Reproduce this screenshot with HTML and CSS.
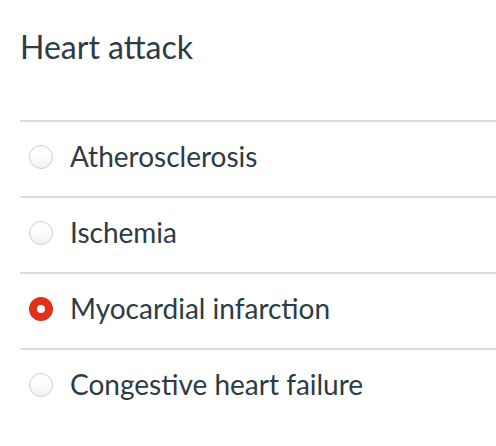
FILE: index.html
```html
<!DOCTYPE html>
<html>
<head>
<meta charset="utf-8">
<link rel="stylesheet" href="styles.css">
</head>
<body>
<div class="quiz">
  <div class="title">Heart attack</div>
  <ul class="options">
    <li class="option"><span class="radio"></span><span class="label">Atherosclerosis</span></li>
    <li class="option"><span class="radio"></span><span class="label">Ischemia</span></li>
    <li class="option"><span class="radio checked"></span><span class="label">Myocardial infarction</span></li>
    <li class="option"><span class="radio"></span><span class="label">Congestive heart failure</span></li>
  </ul>
</div>
</body>
</html>
```
FILE: styles.css
```css
html, body {
  margin: 0;
  padding: 0;
  background: #fff;
}
.quiz {
  padding: 28px 0 0 20px;
  font-family: Lato, "Open Sans", sans-serif;
  color: #2d3b45;
}
.title {
  font-size: 32px;
  line-height: 38px;
  height: 92px;
}
.options {
  list-style: none;
  margin: 0;
  padding: 0;
}
.option {
  display: flex;
  align-items: center;
  height: 74px;
  border-top: 2px solid #dcdcdc;
  padding-left: 9px;
}
.radio {
  width: 24px;
  height: 24px;
  box-sizing: border-box;
  border-radius: 50%;
  border: 1px solid #cfcfcf;
  background: linear-gradient(#ffffff 40%, #f0f0f0);
  margin-right: 17px;
  flex: none;
  position: relative;
  top: -2px;
}
.radio.checked {
  border: 8px solid #e0301e;
  background: #fff;
}
.label {
  font-size: 28px;
  line-height: 34px;
  position: relative;
  top: -3px;
}
```
